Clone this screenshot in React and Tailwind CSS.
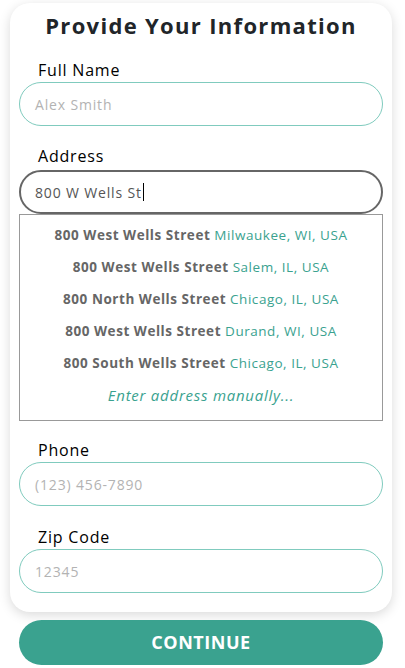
import React from 'react';

const suggestions = [
  ['800 West Wells Street', 'Milwaukee, WI, USA'],
  ['800 West Wells Street', 'Salem, IL, USA'],
  ['800 North Wells Street', 'Chicago, IL, USA'],
  ['800 West Wells Street', 'Durand, WI, USA'],
  ['800 South Wells Street', 'Chicago, IL, USA'],
];

const Field = ({ label, placeholder, className = '' }) => (
  <div className={className}>
    <div className="pl-[19px] text-[16px] leading-[20px] tracking-[0.05em] text-black">{label}</div>
    <div className="mt-[2px] h-[44px] rounded-full border border-[#80cbbe] bg-white flex items-center pl-[15px] text-[14px] tracking-[0.06em] text-[#b3b3b3]">
      {placeholder}
    </div>
  </div>
);

export default function App() {
  return (
    <div className="min-h-screen bg-white font-['Open_Sans',sans-serif]">
      <div className="ml-[10px] mr-[13px] pt-[3px]">
        <div className="rounded-[20px] bg-white shadow-[0_3px_12px_rgba(0,0,0,0.15)] px-[9px] pt-[7px] pb-[19px]">
          <h1 className="text-center text-[22px] leading-[30px] font-bold tracking-[0.06em] text-[#212529]">
            Provide Your Information
          </h1>

          <Field label="Full Name" placeholder="Alex Smith" className="mt-[20px]" />

          <div className="mt-[20px]">
            <div className="pl-[19px] text-[16px] leading-[20px] tracking-[0.05em] text-black">Address</div>
            <div className="mt-[4px] h-[44px] rounded-full border-2 border-[#666666] bg-white flex items-center pl-[14px] text-[14px] tracking-[0.06em] text-[#555555]">
              800 W Wells St
              <span className="ml-[1px] inline-block w-px h-[18px] bg-black" />
            </div>
            <div className="border border-[#999999] pt-[4px] pb-[9px]">
              {suggestions.map(([street, city], i) => (
                <div key={i} className="h-[32px] flex items-center justify-center text-[13.5px] tracking-[0.04em]">
                  <span className="font-bold text-[#666666]">{street}</span>
                  <span className="ml-[4px] text-[#3aa28f]">{city}</span>
                </div>
              ))}
              <div className="h-[32px] flex items-center justify-center text-[15px] italic tracking-[0.05em] text-[#3aa28f]">
                Enter address manually...
              </div>
            </div>
          </div>

          <Field label="Phone" placeholder="(123) 456-7890" className="mt-[19px]" />
          <Field label="Zip Code" placeholder="12345" className="mt-[21px]" />
        </div>

        <button className="mt-[8px] ml-[9px] w-[364px] h-[45px] rounded-full bg-[#3aa28f] text-white font-bold text-[18px] tracking-[0.03em] uppercase">
          Continue
        </button>
      </div>
    </div>
  );
}
